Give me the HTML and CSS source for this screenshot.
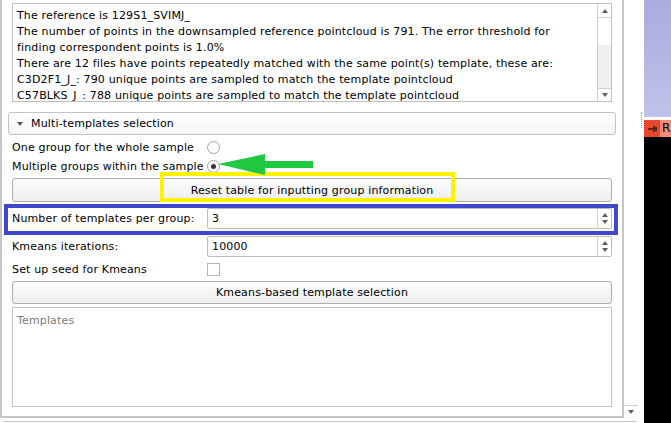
FILE: index.html
```html
<!DOCTYPE html>
<html>
<head>
<meta charset="utf-8">
<link rel="stylesheet" href="styles.css">
</head>
<body>
<div class="app">
  <div class="main">
    <div class="top">
      <div class="pane">
        <div class="log">
          <div class="log-text">
            <div>The reference is 129S1_SVIMJ_</div>
            <div>The number of points in the downsampled reference pointcloud is 791. The error threshold for</div>
            <div>finding correspondent points is 1.0%</div>
            <div>There are 12 files have points repeatedly matched with the same point(s) template, these are:</div>
            <div>C3D2F1_J_: 790 unique points are sampled to match the template pointcloud</div>
            <div>C57BLKS_J_: 788 unique points are sampled to match the template pointcloud</div>
          </div>
          <div class="log-scroll">
            <div class="sb-btn sb-up"><span class="tri-up"></span></div>
            <div class="sb-track"></div>
            <div class="sb-thumb"></div>
            <div class="sb-btn sb-down"><span class="tri-down"></span></div>
          </div>
        </div>
        <div class="group-header"><span class="caret"></span><span>Multi-templates selection</span></div>
        <div class="row radio-first">
          <span class="lbl">One group for the whole sample</span>
          <span class="radio"></span>
        </div>
        <div class="row">
          <span class="lbl">Multiple groups within the sample</span>
          <span class="radio checked"></span>
        </div>
        <div class="btn btn-reset">Reset table for inputting group information</div>
        <div class="row form-row first-form">
          <span class="lbl">Number of templates per group:</span>
          <div class="spin"><span class="spin-val">3</span><span class="spin-btns"><span class="tri-up"></span><span class="tri-down"></span></span></div>
        </div>
        <div class="row form-row second-form">
          <span class="lbl">Kmeans iterations:</span>
          <div class="spin"><span class="spin-val">10000</span><span class="spin-btns"><span class="tri-up"></span><span class="tri-down"></span></span></div>
        </div>
        <div class="row check-row">
          <span class="lbl">Set up seed for Kmeans</span>
          <span class="check"></span>
        </div>
        <div class="btn btn-kmeans">Kmeans-based template selection</div>
        <div class="templates">Templates</div>
      </div>
      <div class="obar">
        <div class="obar-down"><span class="tri-down"></span></div>
      </div>
    </div>
    <div class="bottom-line"></div>
  </div>
  <div class="gutter"><div class="dots"></div></div>
  <div class="dock">
    <div class="dock-top"></div>
    <div class="dock-gap"></div>
    <div class="dock-tab">
      <span class="tab-pin"><svg width="9" height="6" viewBox="0 0 9 6"><rect x="0" y="2" width="5" height="2" fill="#5a2a22"/><rect x="5" y="0" width="2" height="6" fill="#5a2a22"/><rect x="7" y="1" width="2" height="4" fill="#5a2a22"/></svg></span>
      <span class="tab-label">R</span>
    </div>
    <div class="dock-rest"></div>
  </div>
  <svg class="marks" width="671" height="423" viewBox="0 0 671 423">
    <rect x="162" y="174" width="291" height="26" fill="none" stroke="#fff200" stroke-width="4"/>
    <rect x="6" y="206" width="610" height="27" fill="none" stroke="#3f48cc" stroke-width="4"/>
    <polygon points="218,164 265,154 265,161 313,161 313,168 265,168 265,175" fill="#1fc83e"/>
  </svg>
</div>
</body>
</html>
```

FILE: styles.css
```css
* { box-sizing: border-box; }
body {
  margin: 0;
  width: 671px;
  height: 423px;
  overflow: hidden;
  background: #fff;
  font-family: "DejaVu Sans", sans-serif;
  font-size: 11px;
  letter-spacing: 0.15px;
  color: #000;
}
.app { position: relative; display: flex; width: 671px; height: 423px; }
.main { width: 638px; display: flex; flex-direction: column; }
.top { display: flex; height: 418px; }
.pane {
  width: 624px;
  height: 418px;
  border-left: 2px solid #c6c6c6;
  border-right: 2px solid #c6c6c6;
  border-bottom: 2px solid #c6c6c6;
  padding: 3px 10px 0 10px;
  display: flex;
  flex-direction: column;
}
.obar { width: 14px; display: flex; flex-direction: column; justify-content: flex-end; }
.obar-down {
  height: 13px;
  border-top: 1px solid #d0d0d0;
  display: flex; align-items: center; justify-content: center;
}
.bottom-line { margin: 3px 0 0 3px; height: 1px; width: 634px; background: #c6c6c6; }

.gutter { width: 6px; }
.dots { margin: 112px 0 0 3px; height: 16px; border-left: 1px dotted #9a9a9a; }

.dock { width: 27px; display: flex; flex-direction: column; }
.dock-top { height: 117px; background: linear-gradient(#a9acdd, #bfc2ea); }
.dock-gap { height: 3px; background: #fff; }
.dock-tab { height: 17px; display: flex; }
.tab-pin { width: 16px; background: #e8462e; display: flex; align-items: center; justify-content: center; }
.tab-label { flex: 1; background: #f58c7a; font-size: 12px; line-height: 17px; padding-left: 2px; overflow: hidden; }
.dock-rest { flex: 1; background: #000; }

/* triangles */
.tri-up, .tri-down { display: block; width: 0; height: 0; border-left: 3.5px solid transparent; border-right: 3.5px solid transparent; }
.tri-up { border-bottom: 4px solid #5f5f5f; }
.tri-down { border-top: 4px solid #5f5f5f; }

/* log */
.log { height: 99px; border: 1px solid #bfbfbf; display: flex; }
.log-text { flex: 1; padding: 4px 0 0 4px; line-height: 16px; white-space: nowrap; overflow: hidden; }
.log-scroll { width: 14px; border-left: 1px solid #d2d2d2; display: flex; flex-direction: column; }
.sb-btn { display: flex; align-items: center; justify-content: center; }
.sb-up { height: 14px; border-bottom: 1px solid #d2d2d2; }
.sb-track { height: 27px; }
.sb-thumb { flex: 1; background: #efefef; }
.sb-down { height: 13px; border-top: 1px solid #d2d2d2; }

/* group header */
.group-header {
  margin: 10px -4px 0 -4px;
  height: 23px;
  border: 1px solid #c4c4c4;
  border-radius: 3px;
  background: linear-gradient(#ffffff, #f5f5f5);
  display: flex; align-items: center;
  padding-left: 8px;
}
.caret { width: 0; height: 0; border-left: 3.5px solid transparent; border-right: 3.5px solid transparent; border-top: 4px solid #555; margin-right: 8px; }

/* rows */
.row { display: grid; grid-template-columns: 195px 1fr; align-items: center; height: 19px; }
.radio-first { margin-top: 3px; }
.lbl { white-space: nowrap; }
.radio { width: 13px; height: 13px; border: 1px solid #a3a3a3; border-radius: 50%; background: #fff; display: flex; align-items: center; justify-content: center; }
.radio.checked::after { content: ""; width: 5px; height: 5px; border-radius: 50%; background: #333; }
.check { width: 13px; height: 13px; border: 1px solid #b5b5b5; background: #fff; }

.btn {
  border: 1px solid #adadad;
  border-radius: 3px;
  background: linear-gradient(#fcfcfc, #eeeeee);
  display: flex; align-items: center; justify-content: center;
}
.btn-reset { margin-top: 2px; height: 24px; }
.first-form { margin-top: 6px; height: 21px; }
.second-form { margin-top: 7px; height: 21px; }
.check-row { margin-top: 3px; }
.btn-kmeans { margin-top: 2px; height: 23px; }

.spin { height: 21px; border: 1px solid #bcbcbc; border-radius: 2px; display: flex; background: #fff; }
.spin-val { flex: 1; padding-left: 4px; line-height: 19px; }
.spin-btns { width: 14px; border-left: 1px solid #d4d4d4; display: flex; flex-direction: column; align-items: center; justify-content: center; gap: 3px; }

.templates {
  margin-top: 3px;
  height: 100px;
  border: 1px solid #c0c0c0;
  padding: 5px 4px;
  line-height: 16px;
  color: #7b7b7b;
}

.marks { position: absolute; left: 0; top: 0; pointer-events: none; }
```
